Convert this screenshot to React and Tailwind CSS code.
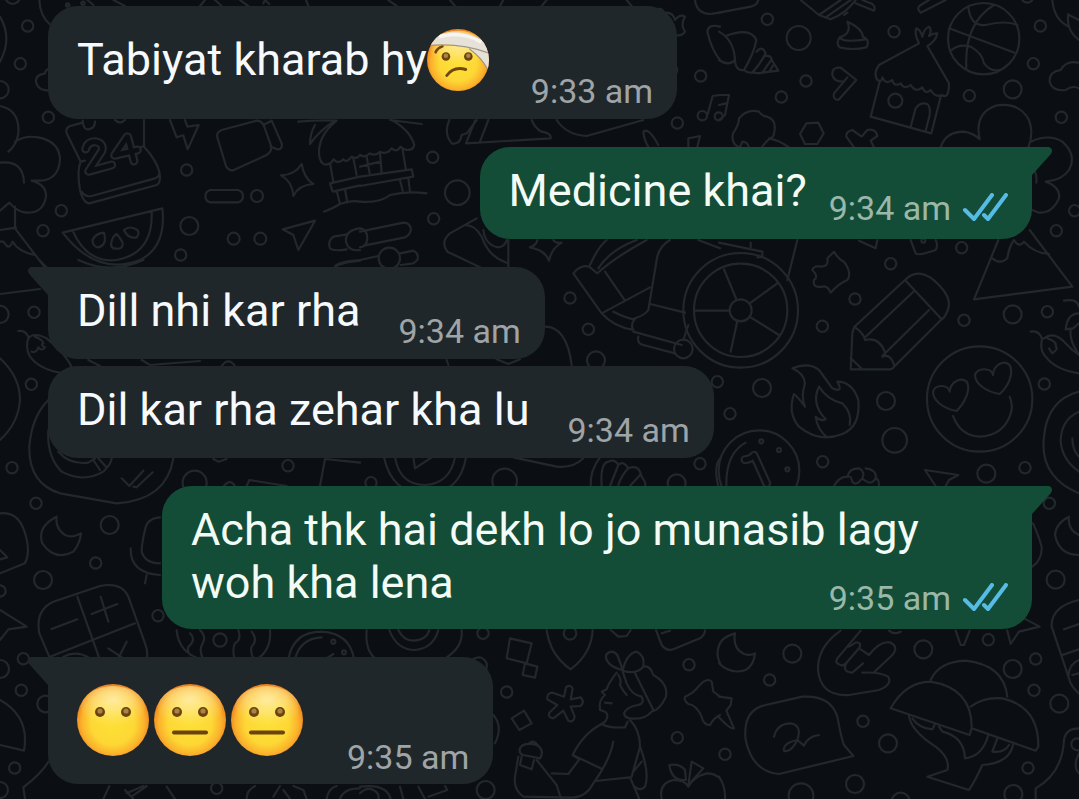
import React from "react";

/* Wallpaper doodles: each sheet is drawn at three units per pixel. */
const SHEETS = [
  {
    at: "translate(0 0)",
    circles: [[83, 78, 17], [61, 191, 17], [0, 269, 26], [145, 352, 17], [560, 510, 17], [184, 632, 17], [129, 692, 17], [568, 678, 27], [701, 716, 18], [781, 716, 18], [542, 765, 17], [771, 588, 18], [38, -10, 22], [203, 15, 5], [249, 10, 5]],
    d: [
      "M0 50Q38 115 0 185M150 205Q135 210 135 220Q105 225 108 245Q112 272 150 272M118 0Q120 50 152 75M262 0L280 15M340 0L375 18M600 18L615 0M645 0L665 18M720 0L745 18M790 10L795 0L808 12M918 0L925 18",
      "M0 318Q60 330 55 400Q50 435 25 455M45 425Q75 405 115 412Q180 425 180 480Q175 540 120 542L95 542Q140 555 138 590Q130 640 80 638Q50 635 28 608L0 632M0 488Q70 480 72 548M45 620V685L135 803M0 690L48 683M0 725Q10 720 20 738Q30 745 38 725Q55 755 105 765",
      "M248 368L210 378Q195 385 200 400L242 485Q230 510 240 570Q250 610 268 610L470 555Q480 550 480 530Q478 490 432 440V360M248 362Q250 390 265 388Q285 385 285 365M345 360Q360 375 375 360M242 485L255 482M412 445L432 438M245 575Q255 592 275 588L465 535Q478 530 478 520",
      "M510 360L530 412L550 406L563 448L596 375L562 380L555 360",
      "M652 412Q648 397 665 390L770 362Q785 362 792 378L814 440Q815 455 800 465L700 511Q685 512 678 498ZM790 375L815 362L845 430Q848 450 832 448L812 440",
      "M631 570H714A19 19 0 0 1 714 607H631A19 19 0 0 1 631 570Z",
      "M843 526Q885 525 905 492Q912 535 940 552Q895 555 880 588Q878 545 843 526Z",
      "M848 688L945 662L895 750L880 705Z",
      "M188 698L487 625Q500 740 420 780Q290 830 188 698ZM218 692Q260 790 350 780Q460 760 455 635M277 722Q285 700 312 698Q322 735 295 742Q280 742 277 722ZM333 735Q335 710 350 702Q370 725 368 735Q365 748 348 746Q335 746 333 735ZM372 690Q390 675 412 690Q420 700 410 712Q385 718 372 690Z",
      "M895 365Q950 360 1005 362Q960 390 930 432Q930 400 945 375M1010 362Q950 410 958 470Q965 500 985 492Q995 490 1000 478Q1015 495 1030 478Q1040 490 1055 470Q1070 480 1080 465M990 490L1000 545M1060 475L1070 525M1080 530L990 550L998 575L1080 556M1010 572L1020 612M1035 568L1042 608M972 635Q1000 625 1020 612Q1050 600 1080 605",
      "M1038 704L1000 710Q982 725 990 745Q1000 755 1040 748M1080 685Q1035 690 1038 725Q1045 755 1080 750M1005 803Q1010 790 1080 782",
    ],
  },
  {
    at: "translate(360 0)",
    circles: [[218, 472, 17], [292, 578, 37], [221, 656, 17], [1022, 228, 17], [952, 369, 17], [1027, 347, 14], [1076, 349, 12]],
    d: [
      "M90 360L185 372M95 360Q150 390 163 435Q160 450 143 450Q130 450 122 440Q110 460 95 445Q80 465 60 455Q45 470 30 460Q15 475 0 465M0 530L155 508L160 530L0 558M20 470L30 526M60 460L65 520M128 450L138 510M0 500L62 485M120 540L128 572M145 535L150 575M0 605Q60 610 90 585Q140 572 200 580",
      "M268 360Q250 400 275 430Q300 435 305 405L320 400L350 360M318 430L345 362M360 425L385 360M318 430L572 415Q575 400 545 395Q525 385 515 360M590 360Q620 405 680 408L850 360",
      "M895 435Q865 380 850 395Q852 420 865 440M985 440V415L1020 408L1012 440M1080 285L1058 288L1043 343",
      "M1005 0Q1010 40 1050 42L1080 38M890 30Q905 20 912 38Q940 35 945 60Q960 40 975 50Q960 75 975 95Q965 110 945 105M1080 80Q1045 70 1042 95Q1055 150 1080 180M945 195Q958 210 945 225M85 0L110 18M270 0L285 18M420 18L430 0M560 0L545 18M800 0L815 18",
    ],
  },
  {
    at: "translate(719 0)",
    circles: [[145, 58, 17], [239, 114, 36], [525, 95, 17], [261, 243, 17], [187, 291, 17], [529, 302, 21], [794, 116, 107], [964, 78, 17], [943, 191, 17], [751, 287, 17], [881, 268, 27], [1027, 352, 17], [1067, 632, 17], [1012, 692, 17], [925, -10, 18]],
    d: [
      "M0 38L95 20Q115 15 118 0M245 0L300 45L335 58Q380 40 410 0M300 45L365 0M320 52L395 0M375 45L385 38M410 10L465 32Q470 20 460 12L430 0M680 0L605 38Q590 25 605 15L630 0",
      "M0 95Q45 120 48 180Q30 200 0 180M20 108Q95 80 112 120Q105 160 75 210Q50 215 48 180M112 155Q130 135 140 160Q125 190 100 218Q85 220 75 210M140 168Q155 165 158 178L130 218Q110 222 100 216M158 180L178 212L130 218M165 192L152 213",
      "M385 65Q430 85 432 110Q455 120 442 142Q400 152 362 142Q350 130 362 112Q400 100 385 65ZM365 115Q380 128 440 118",
      "M340 225Q338 200 365 203L412 240L358 300Q340 298 345 280L385 232M340 225Q345 245 372 245",
      "M600 130L480 195Q462 220 475 240Q490 248 490 232Q500 255 520 240Q525 262 545 250Q555 270 575 255Q590 280 610 262Q620 285 635 270Q650 295 668 285Q690 300 690 250L625 138M600 130Q585 100 592 85Q605 90 610 110Q615 85 630 80Q640 90 630 108Q645 98 655 100Q650 125 625 138M482 245L455 350L637 400L665 290M575 380L590 325Q605 305 625 312Q635 320 632 345L620 392",
      "M690 85L887 158M825 15Q735 70 742 205M748 22Q755 80 800 75Q860 60 895 75M698 150Q720 130 755 140Q790 160 795 190Q815 215 840 210",
      "M1000 0Q1005 60 1050 80M1048 42Q1040 90 1080 120M1050 45L1080 60M1080 188Q1040 180 1025 210Q990 215 992 245Q1000 275 1040 270Q1060 255 1080 265",
      "M665 442Q680 395 735 395Q765 400 782 418Q765 340 830 317Q900 305 930 360Q945 400 928 442M935 425Q990 400 1030 425Q1075 465 1050 510Q1030 540 980 545Q1025 560 1020 595Q1000 640 960 638L940 630M940 500Q955 520 952 548",
      "M90 442Q85 425 70 425Q65 440 60 442Q35 430 42 400Q60 375 60 355Q85 325 120 335Q130 350 145 350Q175 360 165 400Q165 410 155 415Q145 420 130 440M150 415Q180 420 210 442",
      "M262 370L298 368L314 400L295 432L258 432L243 402Z",
      "M405 442L382 410Q380 395 400 390L428 410L445 390Q470 385 475 408L455 422L465 442M0 285L30 285L18 345L0 360M0 315L22 310",
    ],
  },
  {
    at: "translate(0 260)",
    circles: [[0, 163, 26], [102, 157, 17], [94, 373, 17], [36, 623, 17], [108, 730, 17], [864, 617, 17], [584, 668, 36]],
    d: [
      "M118 0L142 25M235 0Q330 45 430 0M0 102L120 87M55 213Q75 210 85 230M85 235Q75 265 90 290Q120 330 190 340L215 320Q195 280 140 235Q100 215 85 235M105 230Q130 240 130 250Q120 255 135 262Q125 275 115 262Q110 280 95 275",
      "M0 295Q60 350 60 420Q55 490 0 540M145 420Q95 470 88 560Q85 670 180 700L350 730Q500 720 520 595M145 510Q140 590 185 635Q250 670 310 635Q335 610 335 595M175 575Q210 615 265 608L285 595M280 600L300 630M295 595L318 620M365 655L388 678L430 632M400 680L410 682L458 637",
      "M425 300L450 315L600 303M265 300L300 318M665 318Q685 290 705 318M1005 20Q1010 5 1080 0M960 678L975 597L1080 608M740 678L748 660L860 678M672 678Q690 655 705 678M640 597L655 605L680 597",
    ],
  },
  {
    at: "translate(360 230)",
    circles: [[630, 204, 17], [685, 298, 17], [708, 391, 27], [970, 357, 28], [1072, 455, 17], [1020, 701, 17], [33, 758, 17], [434, 753, 37], [950, 760, 27], [88, 85, 32]],
    d: [
      "M510 52Q555 60 567 92Q575 55 605 38Q585 40 580 30M510 52Q530 45 532 30M690 105Q715 50 740 30M715 115Q750 60 830 30M640 130Q665 100 690 112Q700 120 712 130Q760 85 860 30M640 130L725 250L870 172M735 125L795 212M930 30Q895 50 890 90L865 240Q855 255 825 265Q810 285 820 300Q760 290 725 250M760 245Q800 265 825 268M870 222L975 248M820 305L965 345M835 320Q830 340 850 345L945 370M985 285L970 330M1015 30L1080 55",
      "M555 290Q620 290 635 405M410 388L445 402L480 388M265 405L260 390M72 682Q95 790 195 792Q300 790 318 682M105 682Q120 765 195 765Q270 760 285 682M160 682L165 715L215 682M460 682L590 710Q640 715 670 685",
      "M720 682Q690 720 692 768M725 768Q720 700 745 695Q765 685 775 705L750 768M775 705Q790 690 805 715Q785 735 775 765M805 715Q830 705 840 725L845 740Q860 760 855 768M810 768L840 735M1080 685Q1060 710 1075 768",
      "M0 5L130 -22Q150 -22 153 -2Q150 15 135 22L15 46M0 -5Q22 -2 22 25Q20 50 0 52M120 70L160 62Q178 70 172 90L160 100L122 105M0 90L55 78M350 -35L270 10Q240 35 262 65L360 112M315 -15Q345 -15 365 20Q385 80 440 98M370 0Q375 45 415 52Q435 50 440 30M445 30V112",
    ],
  },
  {
    at: "translate(719 230)",
    circles: [[65, 241, 172], [65, 241, 140], [65, 241, 33], [515, 101, 17], [408, 207, 17], [310, 289, 17], [129, 474, 27], [735, 271, 17], [881, 253, 27], [985, 245, 17], [728, 53, 17], [501, 513, 27], [527, 631, 37], [33, 551, 17], [976, 462, 17], [782, 507, 158], [311, 695, 17], [802, 731, 27], [918, 713, 17], [127, 634, 6], [180, 660, 6], [205, 718, 6], [120, 722, 121], [613, 32, 6]],
    d: [
      "M53 210L15 118M92 220L175 160M95 262L180 315M55 272L35 365M32 242L-75 242M0 38L130 65V80L115 82M95 52V38M235 30L205 150",
      "M345 65Q360 90 375 95Q400 130 385 150Q360 160 335 188Q325 165 310 170Q280 175 285 150Q300 140 280 120Q285 105 305 110Q330 110 325 85Z",
      "M558 150Q590 115 635 143Q700 195 688 235Q680 260 668 268L525 410Q520 420 500 418L395 418L400 310Q402 295 412 285ZM558 150L668 268M583 185L440 320M630 240L490 378M405 290Q435 310 438 330Q480 320 497 365Q500 380 490 380Q515 370 525 405M395 385L430 418",
      "M220 415Q270 395 300 420Q315 440 340 475Q375 490 355 455Q400 455 418 510Q425 590 370 612Q300 640 240 590Q205 550 225 492Q240 505 258 530Q245 500 258 460Q255 430 220 415ZM300 470Q325 510 370 520Q400 550 392 585M300 470Q275 520 320 568Q305 575 290 560Q295 600 325 622",
      "M713 543C670 535 642 510 642 485C648 463 688 462 692 485C695 455 725 440 743 455C758 480 735 520 713 543ZM842 492C800 485 768 460 768 435C775 412 818 412 822 435C823 405 855 388 872 405C885 430 868 470 842 492ZM702 558Q725 620 785 620Q850 615 872 560Q885 530 872 500",
      "M838 30L765 208L1060 170L932 0M820 85Q845 105 865 85Q870 50 885 30Q900 55 915 35Q945 70 990 72M420 32L470 55L475 30M575 30L590 70Q600 78 650 60Q658 45 650 30",
      "M935 305Q960 300 968 325M970 325Q960 360 980 380Q1010 420 1080 430M975 325Q1000 305 1030 330L1060 360L1080 375M985 325Q1015 335 1010 350Q1020 355 1000 370L990 355M1035 212Q1075 205 1080 230M1040 298Q1045 250 1080 250M1055 300Q1050 330 1080 375M1040 298L1062 295L1080 280",
      "M1080 485Q985 510 975 620Q960 740 1080 790M1080 545Q1025 570 1025 635Q1030 690 1080 725M1060 625Q1060 660 1080 680M80 638Q20 670 22 768",
      "M345 768Q360 740 385 740Q390 715 420 715Q440 725 430 745Q410 770 400 755Q395 735 385 740M440 715Q475 720 470 745Q455 770 430 745M480 768Q480 745 470 745M650 768L618 720L718 735L690 750L680 768",
    ],
  },
  {
    at: "translate(0 500)",
    circles: [[329, 75, 27], [287, 189, 17], [129, 240, 27], [474, 347, 17], [0, 273, 17], [70, 476, 17], [0, 507, 27], [64, 571, 17], [137, 612, 25], [44, 804, 17], [660, 420, 20], [650, 865, 17], [1000, 425, 6], [1032, 457, 6], [0, 870, 24]],
    d: [
      "M0 40Q50 35 70 85Q95 150 75 190L0 220M0 150L22 172L0 178M170 50Q110 80 127 130Q165 185 220 155Q240 130 243 100Q215 115 195 105Q165 85 170 50Z",
      "M480 52Q440 55 435 90Q425 130 425 155Q435 190 480 190M392 145Q390 220 480 225M440 225L435 250",
      "M150 475L118 400Q105 330 160 305L300 258Q365 245 385 290L435 430Q445 455 440 478M232 290L298 475M405 370L150 470M155 387L232 358M275 342L352 312M302 290L325 365M325 445L370 475M380 425L355 475M190 470Q230 450 270 475M0 330L80 380L25 388L0 420",
      "M530 390Q535 460 610 480M810 390Q815 450 770 478M570 400Q590 420 565 440Q560 455 572 465M600 390Q620 410 608 430Q595 450 610 478M715 390Q725 420 705 430Q695 450 705 478M755 395Q775 420 755 440Q750 460 762 478M865 478Q880 395 965 395Q1050 400 1062 478M885 478Q900 415 965 412M975 478L1000 462",
      "M0 600Q90 650 72 752L0 735M145 785Q125 820 70 862L75 897M310 897L328 858M375 870L400 897M380 880L430 858M440 858L395 890M500 860L525 897M740 897Q740 870 765 858M840 858L820 890M850 870L870 897M880 858L910 870L920 897M980 897Q985 865 1010 858M1020 897Q1030 865 1080 865",
    ],
  },
  {
    at: "translate(360 600)",
    circles: [[369, 100, 17], [440, 276, 17], [630, 100, 19], [987, 194, 17], [952, 413, 17], [377, 570, 27]],
    d: [
      "M20 90Q15 150 45 175M305 90Q310 140 260 172M88 90Q110 150 165 150Q220 145 235 90M115 90Q130 122 160 122Q200 120 208 90M335 180Q365 160 380 190Q382 205 375 215M400 345Q430 380 405 430",
      "M450 115L515 130L500 190L440 175ZM495 190L532 200L525 233L488 225ZM455 355L492 332L515 370L478 390Z",
      "M560 90Q570 165 632 208Q695 160 698 90M752 90L775 110L800 108L812 90M888 90L905 135Q920 155 940 148L1020 115Q1035 105 1035 90M905 100L930 92",
      "M612 290L618 262Q630 252 638 265L632 298L662 292Q675 305 662 318L632 320L644 350Q640 370 625 362L610 332L580 355Q562 352 568 338L592 315L562 298Q560 278 578 278Z",
      "M785 210Q735 195 738 165Q755 145 772 165Q782 190 788 212Q800 160 830 155Q855 165 850 200Q830 225 788 212M850 200Q870 195 880 225Q925 250 918 290Q900 330 875 335Q855 360 810 355M825 220L880 330M770 218Q745 250 740 268L725 275L735 285Q715 300 720 330Q745 335 742 350Q740 365 725 372M788 215L800 250Q815 285 845 290Q855 310 835 315Q800 320 792 340Q795 355 810 355M775 225Q785 240 780 255Q790 275 800 285M735 308L755 310M725 372Q745 385 795 382L803 365",
      "M725 372Q670 400 638 465L722 505M760 425Q750 480 700 550Q680 590 640 593L490 590Q460 570 465 530L475 470M638 465L658 478L625 522L575 520M705 543L810 532L838 597M810 360Q840 390 840 440L815 530M840 440Q870 520 855 560Q840 575 825 560M845 485L820 515M480 445Q490 425 530 435Q555 450 540 475L490 465Q475 460 480 445M505 432Q520 415 535 438M485 470L480 495L515 508L522 480M530 480L590 555L603 597",
      "M1080 290L1060 275L1055 245Q1040 230 1015 260Q1000 280 975 290Q970 300 985 312Q1010 315 1025 350Q1030 375 1050 375Q1060 355 1080 345",
      "M905 597Q895 550 940 540Q975 540 985 560Q1000 530 1040 520Q1065 520 1080 535M928 495Q960 490 975 510L978 540Q935 545 928 495ZM985 555L995 485L1030 505ZM0 580Q20 560 40 570Q60 580 55 597M0 560Q80 550 92 597M120 560L130 597M175 560L195 597M205 590L262 570L255 558M1080 130Q1065 160 1080 190",
    ],
  },
  {
    at: "translate(719 480)",
    circles: [[220, 521, 27], [152, 600, 17], [613, 508, 27], [808, 479, 17], [950, 537, 17], [881, 567, 27], [945, 631, 17], [1021, 671, 27], [1010, 299, 27], [991, 70, 17], [432, 724, 17], [507, 790, 27], [18, 823, 17], [408, 912, 27], [246, 947, 37], [545, 965, 27], [927, 864, 17], [883, 942, 27], [1075, 793, 18]],
    d: [
      "M1080 225Q1020 225 1008 165Q1010 130 1050 110Q1045 150 1080 165M942 130Q960 170 968 200Q970 240 940 260M0 550Q35 585 80 570Q105 555 108 520Q95 528 75 522Q40 505 48 460Q10 470 0 495",
      "M365 452Q295 500 297 570Q305 650 390 645L480 630Q520 615 508 590Q480 575 430 578M425 452L355 535Q345 550 365 555Q375 560 385 545L420 505Q430 485 410 488L390 500M385 545Q365 575 400 578L432 550M425 508L450 525Q485 480 515 488Q540 500 520 525L465 577M510 452Q525 465 545 455",
      "M710 452L725 495L735 495L752 452M865 452L875 492L900 455L962 440L915 415M1080 360Q995 380 998 440L1050 595Q1055 620 1080 640M1030 525L1080 508M1035 448L1080 432M1080 540Q1050 550 1048 590M1060 585L1080 580",
      "M635 600Q660 545 740 542Q855 555 865 650M515 685Q560 605 635 605Q760 625 758 745L752 765ZM755 680Q795 650 850 655Q960 680 958 800L950 812L758 745M570 710Q580 755 650 800Q695 835 685 870L625 890L750 930Q770 900 790 855Q870 850 882 795M580 715Q600 745 640 748L648 732M660 740L670 755Q735 770 738 835Q790 830 808 765M835 775L820 815Q855 820 870 795",
      "M375 795L403 828L180 882Q100 875 80 780Q70 690 140 675L250 650Q335 645 355 710Q368 780 375 795ZM165 770Q175 730 215 730Q250 735 235 780Q215 820 195 812Q190 790 235 780L255 797Q265 770 300 765",
      "M0 650L38 655L35 675L22 692L45 745Q35 750 0 712M1080 745Q1040 745 1035 780Q1030 880 950 925V957M1080 820Q1060 860 1080 880M0 890Q20 920 18 957",
    ],
  },
];

function Wallpaper() {
  return (
    <svg
      aria-hidden="true"
      viewBox="0 0 1079 799"
      preserveAspectRatio="xMidYMid slice"
      className="absolute inset-0 h-full w-full fill-none stroke-[#23282c]"
      strokeWidth="6.5"
      strokeLinecap="round"
      strokeLinejoin="round"
    >
      {SHEETS.map((sheet) => (
        <g key={sheet.at} transform={`${sheet.at} scale(0.33333)`}>
          {sheet.circles.map(([cx, cy, r]) => (
            <circle key={`${cx}-${cy}-${r}`} cx={cx} cy={cy} r={r} />
          ))}
          {sheet.d.map((d) => (
            <path key={d} d={d} />
          ))}
        </g>
      ))}
      {/* calendar date and coin mark: a wide stroke with a dark core leaves two parallel lines */}
      <g transform="scale(0.33333)">
        {["stroke-[#23282c] stroke-[27px]", "stroke-[#0b0f13] stroke-[14px]"].map((layer) => (
          <g key={layer} className={layer}>
            <path d="M257 447Q262 425 285 425Q312 430 306 452L266 514L335 495" />
            <path d="M381 411L344 466L412 450M383 411L402 483" />
            <path d="M2235 1379Q2254 1378 2262 1366L2300 1450" />
          </g>
        ))}
      </g>
    </svg>
  );
}

function Face({ id, label, className, children }) {
  return (
    <svg role="img" aria-label={label} viewBox="0 0 72 72" className={className}>
      <defs>
        <radialGradient id={`${id}-skin`} cx="0.5" cy="0.54" r="0.52">
          <stop offset="0" stopColor="#fde036" />
          <stop offset="0.58" stopColor="#fdd835" />
          <stop offset="0.84" stopColor="#fbb12b" />
          <stop offset="1" stopColor="#ec8420" />
        </radialGradient>
        <radialGradient id={`${id}-shine`} cx="0.5" cy="0.3" r="0.62">
          <stop offset="0" stopColor="#fff0b4" stopOpacity="0.85" />
          <stop offset="0.5" stopColor="#feea90" stopOpacity="0.6" />
          <stop offset="1" stopColor="#fde56a" stopOpacity="0" />
        </radialGradient>
        <clipPath id={`${id}-clip`}>
          <circle cx="36" cy="36" r="36" />
        </clipPath>
      </defs>
      <circle cx="36" cy="36" r="36" fill={`url(#${id}-skin)`} />
      <ellipse cx="36" cy="24" rx="32" ry="22" fill={`url(#${id}-shine)`} />
      <g clipPath={`url(#${id}-clip)`}>{children}</g>
    </svg>
  );
}

function Eyes({ y = 28, left = 23, right = 49 }) {
  return (
    <>
      {[left, right].map((x) => (
        <g key={x}>
          <circle cx={x} cy={y} r="5" fill="#6b430c" />
          <circle cx={x} cy={y - 1} r="2.600" fill="#a98248" />
        </g>
      ))}
    </>
  );
}

function BandagedFace() {
  return (
    <Face id="bandaged" label="🤕" className="size-[62px] shrink-0">
      <Eyes y={32} left={22} right={48} />
      <path d="M10 27Q12 22 18 20" fill="none" stroke="#70480d" strokeWidth="3" strokeLinecap="round" />
      <path d="M23 54Q31 43 45 47" fill="none" stroke="#70480d" strokeWidth="3.400" strokeLinecap="round" />
      <path d="M0 20L4 19Q28 15 49 23Q62 32 70 46L76 46V24L62 12Q38 -1 15 6L6 12Z" fill="#e6e2da" />
      <path d="M14 9Q40 2 63 15" fill="none" stroke="#f7f5f0" strokeWidth="4" />
      <path d="M3 19Q40 16 72 28M49 23Q63 33 70 46" fill="none" stroke="#a39683" strokeWidth="1.300" />
    </Face>
  );
}

function PlainFace({ id, mouth }) {
  return (
    <Face id={id} label={mouth ? "😐" : "😶"} className="size-[72px]">
      <Eyes />
      {mouth && <path d="M20 48.500H52" stroke="#6b430c" strokeWidth="4" strokeLinecap="round" />}
    </Face>
  );
}

function ReadTicks() {
  return (
    <svg role="img" aria-label="Read" viewBox="0 0 46 30" className="h-[30px] w-[46px] fill-none stroke-[#56bbe5]" strokeWidth="4" strokeLinecap="round" strokeLinejoin="round">
      <path d="M3 17L12 26L30 2M22 22L26 26L44 2" />
    </svg>
  );
}

function Tail({ out }) {
  return (
    <svg
      aria-hidden="true"
      viewBox="0 0 20 28"
      className={
        out
          ? "absolute top-0 -right-5 h-7 w-5 fill-[#144d37]"
          : "absolute top-0 -left-5 h-7 w-5 -scale-x-100 fill-[#20272a]"
      }
    >
      <path d="M0 0H17Q20 1 20 4Q20 6 18 8L0 28Z" />
    </svg>
  );
}

function Stamp({ out, time, className }) {
  return (
    <footer
      className={`flex items-center text-[34px] leading-10 whitespace-nowrap ${
        out ? "gap-[11px] text-[#9ab8a9]" : "text-[#9fa4a7]"
      } ${className}`}
    >
      <time>{time}</time>
      {out && <ReadTicks />}
    </footer>
  );
}

function Bubble({ out, tail, className, children }) {
  const shape = out ? "self-end bg-[#144d37] text-[#f3fbf6]" : "self-start bg-[#20272a] text-[#f6f9fd]";
  const corner = !tail ? "" : out ? "rounded-tr-none" : "rounded-tl-none";
  return (
    <article className={`relative max-w-[89%] rounded-[30px] pt-[17px] pr-6 pl-[29px] ${shape} ${corner} ${className}`}>
      {tail && <Tail out={out} />}
      {children}
    </article>
  );
}

const TEXT = "pb-[22px] text-[45px] leading-[53px]";

export default function App() {
  return (
    <main className="relative min-h-screen overflow-hidden bg-[#0b0f13] font-['Roboto',sans-serif]">
      <Wallpaper />
      <section aria-label="Conversation" className="relative flex flex-col pt-[6px] pr-[47px] pb-3 pl-12">
        <Bubble className="flex items-end gap-[42px]">
          <p className="flex items-center pb-[22px] text-[45px] leading-[74px]">
            Tabiyat kharab hy
            <BandagedFace />
          </p>
          <Stamp time="9:33 am" className="pb-2" />
        </Bubble>
        <Bubble out tail className="mt-7 flex items-end gap-[22px]">
          <p className={TEXT}>Medicine khai?</p>
          <Stamp out time="9:34 am" className="pb-[11px]" />
        </Bubble>
        <Bubble tail className="mt-7 flex items-end gap-[38px]">
          <p className={TEXT}>Dill nhi kar rha</p>
          <Stamp time="9:34 am" className="pb-2" />
        </Bubble>
        <Bubble className="mt-[7px] flex items-end gap-[38px]">
          <p className={TEXT}>Dil kar rha zehar kha lu</p>
          <Stamp time="9:34 am" className="pb-2" />
        </Bubble>
        <Bubble out tail className="mt-7 pb-[11px]">
          <div className="flow-root max-w-[817px] text-[45px] leading-[53px]">
            Acha thk hai dekh lo jo munasib lagy woh kha lena
            <Stamp out time="9:35 am" className="float-right mt-[22px]" />
          </div>
        </Bubble>
        <Bubble tail className="mt-7 flex items-end gap-11">
          <p className="flex gap-[5px] pt-[10px] pb-7">
            <PlainFace id="silent" />
            <PlainFace id="neutral-a" mouth />
            <PlainFace id="neutral-b" mouth />
          </p>
          <Stamp time="9:35 am" className="pb-[7px]" />
        </Bubble>
      </section>
    </main>
  );
}
